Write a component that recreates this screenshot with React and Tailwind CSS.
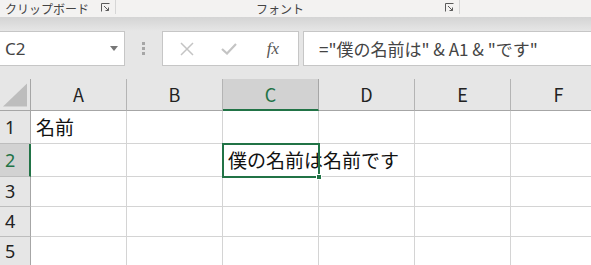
import React from 'react';

const font = { fontFamily: '"Noto Sans CJK JP", "Noto Sans", sans-serif' };
const cols = ['A', 'B', 'C', 'D', 'E', 'F'];
const rows = [
  { n: 1, h: 'h-[33px]', cells: { A: '名前' } },
  { n: 2, h: 'h-[33px]', cells: { C: '僕の名前は名前です' } },
  { n: 3, h: 'h-[30px]', cells: {} },
  { n: 4, h: 'h-[30px]', cells: {} },
  { n: 5, h: 'h-[30px]', cells: {} },
];

function Launcher() {
  return (
    <svg width="9" height="9" viewBox="0 0 9 9" className="text-[#5a5a5a]">
      <path d="M0.5 8.5V0.5H8.5" fill="none" stroke="currentColor" />
      <path d="M3 3L7.5 7.5M4.5 7.5H7.5V4.5" fill="none" stroke="currentColor" />
    </svg>
  );
}

function Ribbon() {
  return (
    <div className="h-[17px] bg-[#f3f2f1] flex items-start text-[12px] leading-[17px] text-[#444]">
      <div className="w-[101px] h-[17px] pl-[5px] whitespace-nowrap">クリップボード</div>
      <div className="w-[15px] h-[14px] flex items-center border-r border-[#d6d6d6]">
        <Launcher />
      </div>
      <div className="w-[329px] h-[17px] pl-[140px] whitespace-nowrap">フォント</div>
      <div className="w-[15px] h-[14px] flex items-center border-r border-[#d6d6d6]">
        <Launcher />
      </div>
    </div>
  );
}

function FormulaBar() {
  return (
    <div className="h-[35px] flex items-stretch">
      <div className="w-[125px] bg-white border border-[#c6c6c6] border-l-0 flex items-center pl-[5px] pr-[6px]">
        <span className="text-[17px] text-[#444]" style={{ fontFamily: '"Noto Sans", sans-serif' }}>C2</span>
        <svg width="8" height="5" viewBox="0 0 8 5" className="ml-auto">
          <path d="M0 0H8L4 5Z" fill="#777" />
        </svg>
      </div>
      <div className="w-[37px] flex flex-col items-center justify-center gap-[2px]">
        <span className="w-[3px] h-[3px] bg-[#a6a6a6]" />
        <span className="w-[3px] h-[3px] bg-[#a6a6a6]" />
        <span className="w-[3px] h-[3px] bg-[#a6a6a6]" />
      </div>
      <div className="w-[137px] bg-white border border-[#c6c6c6] flex items-center">
        <div className="w-[44px] flex justify-center pl-[4px]">
          <svg width="14" height="14" viewBox="0 0 14 14">
            <path d="M1 1L13 13M13 1L1 13" stroke="#c4c4c4" strokeWidth="1.5" />
          </svg>
        </div>
        <div className="w-[44px] flex justify-center">
          <svg width="16" height="12" viewBox="0 0 16 12">
            <path d="M1 6L6 10.5L15 1" fill="none" stroke="#c4c4c4" strokeWidth="2.2" />
          </svg>
        </div>
        <div className="w-[44px] flex justify-center">
          <span className="text-[17px] italic text-[#555]" style={{ fontFamily: '"Liberation Serif", serif' }}>fx</span>
        </div>
      </div>
      <div className="w-[4px]" />
      <div className="flex-1 bg-white border border-[#c6c6c6] border-r-0 flex items-center pl-[15px]">
        <span className="text-[17px] text-[#444] whitespace-nowrap" style={font}>
          ="僕の名前は" &amp; A1 &amp; "です"
        </span>
      </div>
    </div>
  );
}

function Grid() {
  return (
    <div className="relative">
      <div className="flex h-[32px]">
        <div className="w-[31px] border-r border-b border-[#a6a6a6] bg-[#e6e6e6] flex items-end justify-end p-[3px] pb-[3px]">
          <svg width="25" height="24" viewBox="0 0 25 24">
            <path d="M25 0V24H0Z" fill="#bdbdbd" />
          </svg>
        </div>
        {cols.map((c) => (
          <div
            key={c}
            className={
              c === 'C'
                ? 'w-[96px] shrink-0 bg-[#d2d2d2] border-r border-[#a6a6a6] border-b-2 border-b-[#217346] text-[#217346] flex items-center justify-center text-[18px]'
                : 'w-[96px] shrink-0 bg-[#e6e6e6] border-r border-b border-[#b4b4b4] border-b-[#a6a6a6] text-[#222] flex items-center justify-center text-[18px]'
            }
            style={font}
          >
            {c}
          </div>
        ))}
      </div>
      {rows.map((r) => (
        <div key={r.n} className={`flex ${r.h}`}>
          <div
            className={
              r.n === 2
                ? 'w-[31px] shrink-0 bg-[#d2d2d2] border-r-2 border-[#217346] border-b border-b-[#bdbdbd] text-[#217346] text-[18px] flex items-center pl-[5px]'
                : 'w-[31px] shrink-0 bg-[#e6e6e6] border-r border-[#a6a6a6] border-b border-b-[#bdbdbd] text-[#222] text-[18px] flex items-center pl-[5px]'
            }
            style={{ fontFamily: '"Noto Sans", sans-serif' }}
          >
            {r.n}
          </div>
          {cols.map((c) => (
            <div
              key={c}
              className={
                r.cells[c]
                  ? 'w-[96px] shrink-0 bg-white border-r border-b border-[#d4d4d4] flex items-center pl-[5px] text-[19px] text-[#111] whitespace-nowrap relative z-[15] overflow-visible'
                  : 'w-[96px] shrink-0 bg-white border-r border-b border-[#d4d4d4]'
              }
              style={font}
            >
              {r.cells[c] || ''}
            </div>
          ))}
        </div>
      ))}
      <div className="absolute left-[222px] top-[64px] w-[98px] h-[35px] border-2 border-[#217346] z-20 pointer-events-none">
        <div className="absolute right-[-4px] bottom-[-4px] w-[6px] h-[6px] bg-[#217346] border border-white" />
      </div>
    </div>
  );
}

export default function App() {
  return (
    <div className="w-[591px] h-[265px] overflow-hidden bg-[#e6e6e6]" style={font}>
      <Ribbon />
      <div className="h-[14px] bg-gradient-to-b from-[#d4d4d4] to-[#e6e6e6]" />
      <FormulaBar />
      <div className="h-[13px]" />
      <Grid />
    </div>
  );
}
